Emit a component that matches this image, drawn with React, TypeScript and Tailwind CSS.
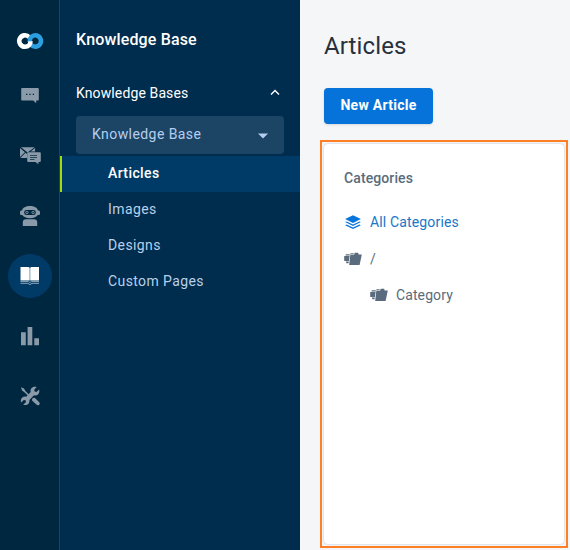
import type { ReactNode } from "react";

const svgClass = "block size-6 shrink-0";

function Logo() {
  return (
    <svg className="block h-5 w-7" viewBox="0 0 28 20" fill="none" strokeWidth="4.6">
      <path d="M13.200 6.200A5.700 5.700 0 1 0 9 15.700" stroke="#fff" />
      <path d="M13.700 10.800c0-3.900 2.300-6.500 5.600-6.500a5.700 5.700 0 1 1-4.300 9.500" stroke="#2b9fe0" />
      <path d="M8.900 15.700c3.500 0 5.600-2.200 5.600-5.500" stroke="#fff" />
    </svg>
  );
}

function ChatIcon() {
  return (
    <svg className={svgClass} viewBox="0 0 24 24" fill="currentColor">
      <path d="M4 4h16a.8.8 0 0 1 .8.8v11a.8.8 0 0 1-.8.8h-1.800v2.600l-3-2.600H4a.8.8 0 0 1-.8-.8v-11A.8.8 0 0 1 4 4Z" />
      <path d="M8 9.700h1.300V11H8zM11.300 9.700h1.300V11h-1.300zM14.700 9.700H16V11h-1.300z" fill="#002740" />
    </svg>
  );
}

function MailChatIcon() {
  return (
    <svg className={svgClass} viewBox="0 0 24 24" fill="currentColor">
      <path d="M3 3.200h13.600L9.600 8.400 3 3.200ZM2 4l4.900 4.300L2 13V4ZM7.500 8.800l1.500 1.100V14H2.300l5.200-5.200ZM11.900 7.900l5.200-4v3.700h-4.500Z" />
      <path d="M10.200 8.200h11.600a1 1 0 0 1 1 1v7.700a1 1 0 0 1-1 1h-1.400v2.400l-2.900-2.400h-7.300a1 1 0 0 1-1-1V9.200a1 1 0 0 1 1-1Z" />
      <path d="M12 11.500h7M12 13.500h7M12 15.500h4.500" stroke="#1d3f56" strokeWidth=".9" />
    </svg>
  );
}

function RobotIcon() {
  return (
    <svg className={svgClass} viewBox="0 0 24 24" fill="currentColor">
      <path d="M12 2c4.200 0 7.300 1.600 8 4.500h.6c.8 0 1.400.7 1.400 1.500v1.500c0 .9-.6 1.600-1.400 1.600h-.8c-1.100 2-4.200 3.200-7.800 3.200s-6.700-1.200-7.800-3.200h-.8c-.8 0-1.400-.7-1.400-1.600V8c0-.8.6-1.500 1.400-1.500H4C4.700 3.600 7.800 2 12 2Z" />
      <rect x="6.200" y="6" width="11.600" height="5" rx="2.200" fill="#002740" />
      <circle cx="8.900" cy="8.500" r="1.200" fill="none" stroke="currentColor" strokeWidth=".9" />
      <circle cx="15.100" cy="8.500" r="1.200" fill="none" stroke="currentColor" strokeWidth=".9" />
      <path d="M8 15.200h8c2 0 3.200 1.200 3.200 3.200v3.700H4.800v-3.700c0-2 1.200-3.200 3.200-3.200Z" />
    </svg>
  );
}

function BookIcon() {
  return (
    <svg className={svgClass} viewBox="0 0 24 24" fill="currentColor">
      <path d="M2.500 3h8l1.200.7V16.500h-9.200ZM21 3h-7.700l-1.100.7V16.500H21Z" />
      <path d="M2.500 17.500h7.800l1.600 1 1.600-1h7.500" fill="none" stroke="#91a9bc" strokeWidth=".9" />
      <path d="M2.500 19.300h7.300l2.100 1.300 2.100-1.300h7" fill="none" stroke="#91a9bc" strokeWidth="1" />
    </svg>
  );
}

function BarsIcon() {
  return (
    <svg className={svgClass} viewBox="0 0 24 24" fill="currentColor">
      <path d="M3 8.300h4.800v12.900H3zM9.600 3.100h4.700v18.100H9.600zM16.300 14.200H21v7h-4.700z" />
    </svg>
  );
}

function ToolsIcon() {
  return (
    <svg className={svgClass} viewBox="0 0 24 24" fill="currentColor">
      <path d="m3 3.200 3 1.200 1.400 2.500 4 4-1.100 1.100-4.200-4.100-2.100-1.400Z" />
      <path d="m15 14 1.700-.3 4.300 4.200c1 1 .9 2.100.2 2.800s-1.800.8-2.800-.2L14 16.600l.1-1.500Z" />
      <path d="m18.700 3-2.500 2.800.4 1.800 1.800.4 2.700-2.500c.8 2.600-.2 5.100-2.500 5.800-.9.300-1.800.3-2.600 0l-4.600 4.600c.5 3-1.700 5.500-4.700 5.200-.6 0-1-.2-1.400-.3l2.700-2.700-.4-1.800-1.800-.4-2.700 2.500c-.9-3.100.9-5.700 3.700-5.900.5 0 .9 0 1.400.2L12.700 8c-.7-3 1.400-5.400 4.200-5.300.7 0 1.300.1 1.800.3Z" />
    </svg>
  );
}

function LayersIcon() {
  return (
    <svg className="block h-4 w-[18px] shrink-0" viewBox="0 0 18 16" fill="#0875db">
      <path d="m9 1.200 7.900 3.900L9 9 1.100 5.100Z" />
      <path d="m1.100 8.100 1.500-.7L9 10.500l6.400-3.100 1.500.7L9 12ZM1.100 11.200l1.500-.7L9 13.600l6.400-3.100 1.500.7L9 15.100Z" />
    </svg>
  );
}

function FoldersIcon() {
  return (
    <svg className="block h-4 w-[18px] shrink-0" viewBox="0 0 18 16" fill="#596b7c">
      <path d="M1.800 3.200h4v1.200H1.500ZM.2 5.100h5.400l-.7 5H.9c-.4 0-.7-.3-.7-.7ZM6.500 2.300h3.200v1H6.200ZM1.800 10.500h3l-.2 1.800H2.400Z" />
      <path d="M6.300 3.800h3.800l.6-2.100h3.500l.4 1.800h3.200L15.600 13.900H5.200Z" />
    </svg>
  );
}

function RailItem({ active = false, children }: { active?: boolean; children: ReactNode }) {
  return (
    <button
      className={
        active
          ? "flex size-11 items-center justify-center rounded-full bg-[#003b68] text-white"
          : "flex size-11 items-center justify-center rounded-full text-[#8b9aa8]"
      }
    >
      {children}
    </button>
  );
}

function MenuItem({ label, active = false }: { label: string; active?: boolean }) {
  return (
    <a
      className={
        active
          ? "flex h-9 items-center border-l-2 border-[#a0dc0b] bg-[#003b68] pb-0.5 pl-[46px] text-white"
          : "flex h-9 items-center border-l-2 border-transparent pb-0.5 pl-[46px] font-normal text-[#b8d0ea]"
      }
    >
      {label}
    </a>
  );
}

export default function App() {
  return (
    <div className="flex h-[550px] w-[570px] overflow-hidden bg-[#f5f6f8] font-['Roboto',sans-serif] text-sm">
      <nav className="flex w-[60px] shrink-0 flex-col items-center border-r border-[#194663] bg-[#002740] pt-[31px] pl-px">
        <Logo />
        <div className="mt-[23px] flex flex-col gap-4">
          <RailItem><ChatIcon /></RailItem>
          <RailItem><MailChatIcon /></RailItem>
          <RailItem><RobotIcon /></RailItem>
          <RailItem active><BookIcon /></RailItem>
          <RailItem><BarsIcon /></RailItem>
          <RailItem><ToolsIcon /></RailItem>
        </div>
      </nav>

      <aside className="w-60 shrink-0 bg-[#002c4d] pt-7">
        <h2 className="px-4 text-base leading-6 font-medium tracking-[0.15px] text-white">Knowledge Base</h2>
        <div className="mt-[31px] flex h-5 items-center justify-between pr-5 pl-4 tracking-[0.12px] text-white">
          <span>Knowledge Bases</span>
          <svg className="block h-2.5 w-2.5" viewBox="0 0 10 10" fill="none" stroke="currentColor" strokeWidth="1.400">
            <path d="m1 6.500 4-4 4 4" />
          </svg>
        </div>
        <div className="mx-4 mt-[13px] flex h-[38px] items-center justify-between rounded bg-[#1c4565] pr-4 pb-0.5 pl-4 tracking-[0.43px] text-[#b5cef0]">
          <span>Knowledge Base</span>
          <svg className="mt-1 block h-1.5 w-2.5" viewBox="0 0 10 6" fill="currentColor">
            <path d="M0 .5h10l-5 5Z" />
          </svg>
        </div>
        <div className="mt-0.5 font-medium tracking-[0.4px]">
          <MenuItem label="Articles" active />
          <MenuItem label="Images" />
          <MenuItem label="Designs" />
          <MenuItem label="Custom Pages" />
        </div>
      </aside>

      <main className="w-[270px] pt-[30px]">
        <h1 className="ml-6 text-2xl leading-8 font-normal tracking-[0.12px] text-[#26313d]">Articles</h1>
        <button className="mt-[26px] ml-6 flex h-9 w-[109px] items-center justify-center rounded bg-[#0573d9] pb-0.5 font-bold tracking-[0.28px] text-white shadow-sm">
          New Article
        </button>
        <div className="mt-4 ml-5 h-[408px] w-[248px] border-2 border-[#ff7f27] p-0.5">
          <section className="h-[400px] w-60 rounded bg-white px-5 pt-6 text-[#596b7c] shadow-[0_0_2px_#aebcc3]">
            <h3 className="leading-5 font-medium tracking-[0.1px]">Categories</h3>
            <div className="mt-6 flex h-5 items-center gap-2 tracking-[0.15px] text-[#1976c8]">
              <LayersIcon />
              All Categories
            </div>
            <div className="mt-[17px] flex h-5 items-center gap-2">
              <FoldersIcon />/
            </div>
            <div className="mt-4 ml-[26px] flex h-5 items-center gap-2 tracking-[0.1px]">
              <FoldersIcon />
              Category
            </div>
          </section>
        </div>
      </main>
    </div>
  );
}
